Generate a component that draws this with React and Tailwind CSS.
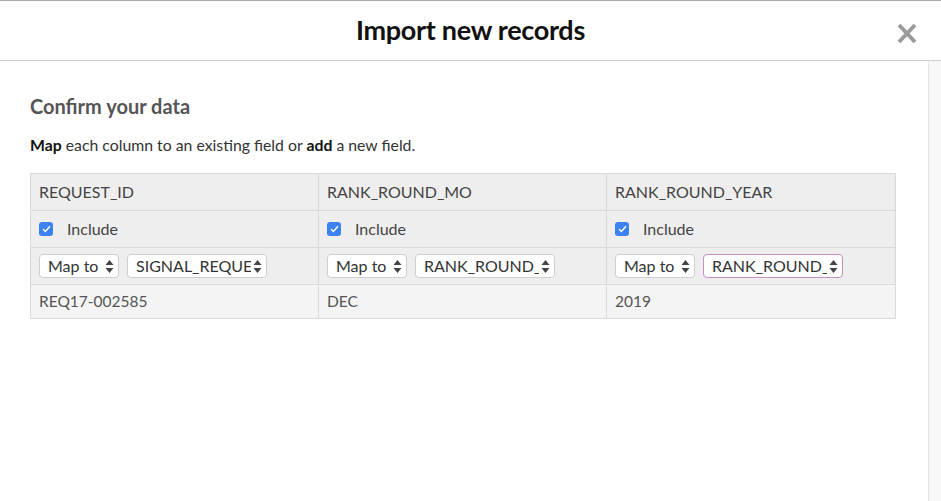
import React from "react";

const font = { fontFamily: "Lato, 'Open Sans', sans-serif" };

const Arrows = () => (
  <svg width="9" height="15" viewBox="0 0 9 15" className="shrink-0">
    <path d="M4.5 1 L8.5 6 L0.5 6 Z" fill="#444" />
    <path d="M4.5 14 L8.5 9 L0.5 9 Z" fill="#444" />
  </svg>
);

const FakeSelect = ({ label, width, focused }) => (
  <div
    className={`flex items-center h-[24px] pl-[8px] pr-[4px] gap-[2px] rounded-[4px] bg-white border ${
      focused ? "border-[#c58fc2]" : "border-[#cfcfcf]"
    } ${width}`}
  >
    <span className="flex-1 min-w-0 text-[16px] text-[#333] whitespace-nowrap overflow-hidden leading-[22px]">
      {label}
    </span>
    <Arrows />
  </div>
);

const Check = () => (
  <span className="w-[14px] h-[14px] rounded-[3px] bg-[#3b82f6] flex items-center justify-center shrink-0">
    <svg width="9" height="8" viewBox="0 0 9 8">
      <path d="M1 4.2 L3.4 6.5 L8 1.2" fill="none" stroke="white" strokeWidth="1.4" />
    </svg>
  </span>
);

const columns = [
  { name: "REQUEST_ID", field: "SIGNAL_REQUE", value: "REQ17-002585" },
  { name: "RANK_ROUND_MO", field: "RANK_ROUND_", value: "DEC" },
  { name: "RANK_ROUND_YEAR", field: "RANK_ROUND_", value: "2019", focused: true },
];

export default function App() {
  return (
    <div className="w-[941px] h-[501px] bg-white flex flex-col overflow-hidden" style={font}>
      <div className="h-[61px] shrink-0 border-t border-t-[#aaaaaa] border-b border-b-[#cccccc] relative flex items-center justify-center">
        <h1 className="text-[27px] font-bold text-[#111] tracking-[-0.3px]">Import new records</h1>
        <button className="absolute left-[897px] top-[22px]">
          <svg width="20" height="21" viewBox="0 0 20 21">
            <path d="M2 2 L18 19 M18 2 L2 19" stroke="#9a9a9a" strokeWidth="4" />
          </svg>
        </button>
      </div>
      <div className="flex flex-1 min-h-0">
        <div className="flex-1 pl-[30px] pr-[32px] pt-[33px]">
          <h2 className="text-[20px] font-bold text-[#555] leading-[24px]">Confirm your data</h2>
          <p className="mt-[17px] text-[15.8px] text-[#333] leading-[20px]">
            <b className="font-bold text-[#111]">Map</b> each column to an existing field or{" "}
            <b className="font-bold text-[#111]">add</b> a new field.
          </p>
          <div className="mt-[18px] grid grid-cols-[287px_288px_289px] border border-[#d9d9d9] w-[866px]">
            {columns.map((c, i) => (
              <div
                key={c.name}
                className={`flex flex-col ${i > 0 ? "border-l border-[#d9d9d9]" : ""}`}
              >
                <div className="h-[37px] bg-[#eeeeee] border-b border-[#d9d9d9] flex items-center pl-[8px] text-[16px] text-[#444]">
                  {c.name}
                </div>
                <div className="h-[37px] bg-[#eeeeee] border-b border-[#d9d9d9] flex items-center pl-[8px] gap-[14px] text-[16px] text-[#444]">
                  <Check />
                  <span>Include</span>
                </div>
                <div className="h-[37px] bg-[#eeeeee] border-b border-[#d9d9d9] flex items-center pl-[8px] gap-[8px]">
                  <FakeSelect label="Map to" width="w-[80px]" />
                  <FakeSelect label={c.field} width="w-[140px]" focused={c.focused} />
                </div>
                <div className="h-[33px] bg-[#f4f4f4] flex items-center pl-[8px] text-[15.5px] text-[#555]">
                  {c.value}
                </div>
              </div>
            ))}
          </div>
        </div>
        <div className="w-[13px] shrink-0 bg-[#f8f8f8] border-l border-[#e6e6e6]" />
      </div>
    </div>
  );
}
